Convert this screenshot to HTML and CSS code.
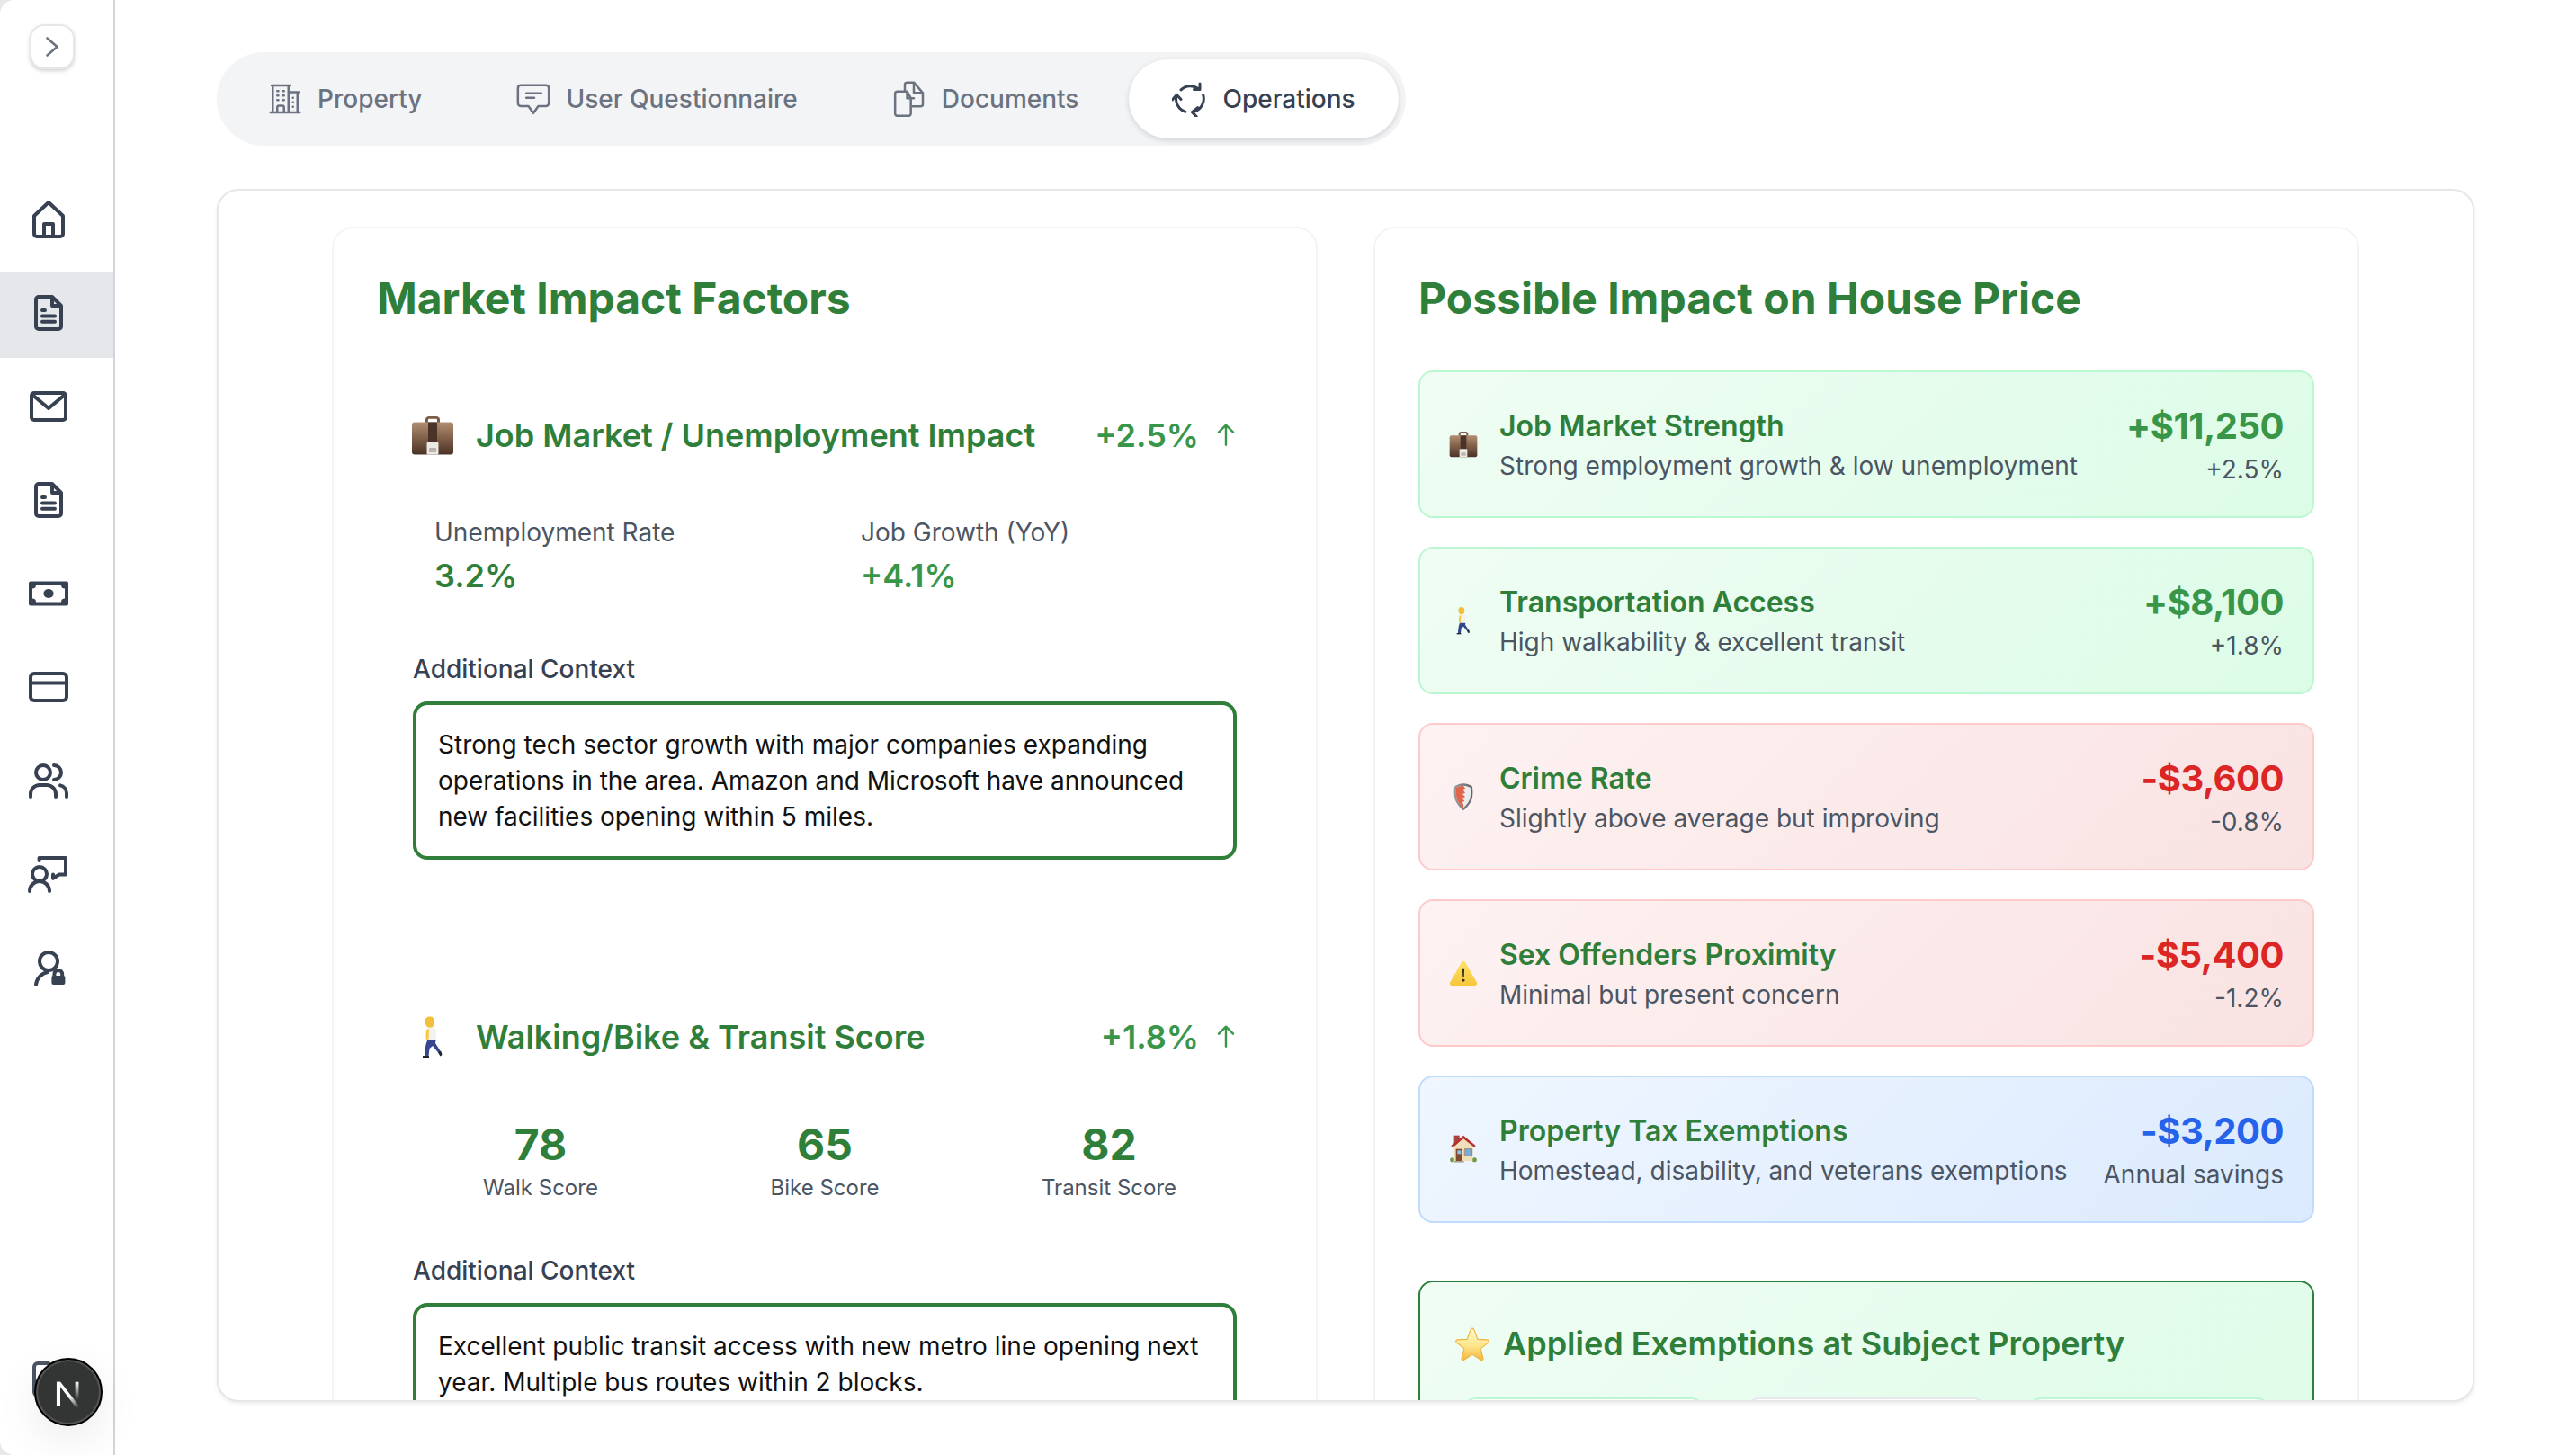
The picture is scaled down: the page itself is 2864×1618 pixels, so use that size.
FILE: index.html
```html
<!DOCTYPE html>
<html lang="en">
<head>
    <meta charset="UTF-8">
    <title>Operations</title>
    <link rel="stylesheet" href="styles.css">
</head>
<body>
<div class="app">
    <!--sidebar-->
    <aside class="sidebar">
        <button class="toggle">
            <svg viewBox="0 0 24 24"><path d="M6.500 2.500L17.500 12 6.500 21.500"/></svg>
        </button>
        <nav class="nav">
            <a class="nav_item"><svg viewBox="0 0 24 24"><path d="M12 2.500l8 7.500v10a1.500 1.500 0 0 1-1.500 1.500h-13A1.500 1.500 0 0 1 4 20V10zM9.500 21.500v-7h5v7"/></svg></a>
            <a class="nav_item current"><svg viewBox="0 0 24 24"><path d="M14 3H6.500A1.500 1.500 0 0 0 5 4.500v15A1.500 1.500 0 0 0 6.500 21h11a1.500 1.500 0 0 0 1.500-1.500V8zM14 3v5h5M8.500 10.500h1.500M8.500 13.700h7M8.500 16.900h7"/></svg></a>
            <a class="nav_item"><svg viewBox="0 0 24 24"><rect x="2.500" y="4.500" width="19" height="15" rx="1.500"/><path d="M3 5.500l9 7.500 9-7.500"/></svg></a>
            <a class="nav_item"><svg viewBox="0 0 24 24"><path d="M14 3H6.500A1.500 1.500 0 0 0 5 4.500v15A1.500 1.500 0 0 0 6.500 21h11a1.500 1.500 0 0 0 1.500-1.500V8zM14 3v5h5M8.500 10.500h1.500M8.500 13.700h7M8.500 16.900h7"/></svg></a>
            <a class="nav_item"><svg viewBox="0 0 24 24" class="solid"><rect x="1" y="5.250" width="22" height="13.500" rx="1"/><path class="cut" d="M5 7.200h14a2 2 0 0 0 2 2v5.600a2 2 0 0 0-2 2H5a2 2 0 0 0-2-2V9.200a2 2 0 0 0 2-2z"/><ellipse cx="12" cy="12" rx="2.800" ry="2.500"/></svg></a>
            <a class="nav_item"><svg viewBox="0 0 24 24"><rect x="2" y="4.500" width="20" height="15" rx="2"/><path d="M2 9.800h20"/></svg></a>
            <a class="nav_item"><svg viewBox="0 0 24 24"><circle cx="9" cy="7.500" r="4"/><path d="M2 21v-1.500A5 5 0 0 1 7 14.500h4a5 5 0 0 1 5 5V21M15 3.500a4 4 0 0 1 0 8M18.500 14.700a4.500 4.500 0 0 1 3.500 4.300V21"/></svg></a>
            <a class="nav_item"><svg viewBox="0 0 24 24"><circle cx="7" cy="12" r="4"/><path d="M1.500 21.500a5.500 5.500 0 0 1 11 0M6.800 4.500V3H21.500v9.200H18l-3.500 2.200v-2.200"/></svg></a>
            <a class="nav_item"><svg viewBox="0 0 24 24"><circle cx="12" cy="8.500" r="5"/><path d="M5 21.500a8 8 0 0 1 6.500-7"/><path d="M15.200 16.700v-1a2.200 2.200 0 0 1 4.400 0v1"/><rect class="fill" x="13.700" y="16.500" width="7.500" height="5" rx="1"/></svg></a>
        </nav>
        <svg class="nav_last" viewBox="0 0 24 24"><path d="M12 3H6a2 2 0 0 0-2 2v14a2 2 0 0 0 2 2h6"/></svg>
        <!--dev indicator-->
        <div class="next_badge">
            <svg viewBox="0 0 32 32">
                <defs>
                    <linearGradient id="nfade" x1="0.300" y1="0.300" x2="0.900" y2="1"><stop offset="0.4" stop-color="#fff"/><stop offset="1" stop-color="#fff" stop-opacity="0"/></linearGradient>
                    <linearGradient id="nfade2" x1="0" y1="0" x2="0" y2="1"><stop offset="0" stop-color="#fff"/><stop offset="0.8" stop-color="#fff" stop-opacity="0"/></linearGradient>
                </defs>
                <rect x="10.200" y="11" width="1.800" height="12" fill="#fff"/>
                <path d="M10.200 11h1.900l9.500 12.200-1.400 1z" fill="url(#nfade)"/>
                <rect x="19.400" y="11" width="1.700" height="11" fill="url(#nfade2)"/>
            </svg>
        </div>
    </aside>

    <div class="content">
        <!--tabs-->
        <div class="tabs">
            <a class="tab">
                <svg viewBox="0 0 24 24"><path d="M2.250 21h19.500m-18-18v18m10.500-18v18m6-13.500V21M6.750 6.750h.75m-.75 3h.75m-.75 3h.75m3-6h.75m-.75 3h.75m-.75 3h.75M6.750 21v-3.375c0-.621.504-1.125 1.125-1.125h2.250c.621 0 1.125.504 1.125 1.125V21M3 3h12m-.75 4.500H21m-3.750 3.750h.008v.008h-.008zm0 3h.008v.008h-.008zm0 3h.008v.008h-.008z"/></svg>
                Property
            </a>
            <a class="tab">
                <svg viewBox="0 0 24 24"><path d="M3.500 2.800h17a2 2 0 0 1 1.800 2v10a2 2 0 0 1-2 2h-5L12 21.500l-3.300-4.700h-5a2 2 0 0 1-2-2v-10a2 2 0 0 1 1.800-2zM7.300 8.300h10M7.300 11.200h5.300"/></svg>
                User Questionnaire
            </a>
            <a class="tab">
                <svg viewBox="0 0 24 24"><path d="M10.500 7H4a1.500 1.500 0 0 0-1.500 1.500v13.500A1.500 1.500 0 0 0 4 23.300h7.500A1.500 1.500 0 0 0 13 22v-10.500zM10.500 7v4.500H15"/><path d="M9 7V2.500A1.500 1.500 0 0 1 10.500 1H15l6 7v7.500a1.500 1.500 0 0 1-1.500 1.500H14M15 1v7h6"/></svg>
                Documents
            </a>
            <a class="tab active">
                <svg viewBox="0 0 24 24"><path d="M6 5.900a9 9 0 0 1 12-.4M18.600 1.800V5.700h-3.900M20.800 9.300a9 9 0 0 1-6.800 11.400M17.200 17.800l-3.800 3 2.900 2.900M9 20.600a9 9 0 0 1-6-10.800M.4 12.500l2.700-3.300 2.900 3.100"/></svg>
                Operations
            </a>
        </div>

        <!--main card-->
        <div class="main_card">
            <div class="panels">
                <!--left-->
                <section class="panel">
                    <h2 class="panel_title">Market Impact Factors</h2>

                    <div class="factor">
                        <div class="factor_head">
                            <svg class="emoji large" viewBox="0 0 48 48"><use href="#briefcase"/></svg>
                            <h3 class="factor_name">Job Market / Unemployment Impact</h3>
                            <span class="factor_pct">+2.5%</span>
                            <svg class="arrow" viewBox="0 0 24 24"><path d="M12 20V3.500M6 9.500l6-6 6 6"/></svg>
                        </div>
                        <div class="stats two">
                            <div class="stat">
                                <div class="stat_label">Unemployment Rate</div>
                                <div class="stat_value">3.2%</div>
                            </div>
                            <div class="stat">
                                <div class="stat_label">Job Growth (YoY)</div>
                                <div class="stat_value up">+4.1%</div>
                            </div>
                        </div>
                        <div class="context_label">Additional Context</div>
                        <div class="context">Strong tech sector growth with major companies expanding operations in the area. Amazon and Microsoft have announced new facilities opening within 5 miles.</div>
                    </div>

                    <div class="factor second">
                        <div class="factor_head">
                            <svg class="emoji large" viewBox="0 0 48 48"><use href="#walker"/></svg>
                            <h3 class="factor_name">Walking/Bike &amp; Transit Score</h3>
                            <span class="factor_pct">+1.8%</span>
                            <svg class="arrow" viewBox="0 0 24 24"><path d="M12 20V3.500M6 9.500l6-6 6 6"/></svg>
                        </div>
                        <div class="stats three">
                            <div class="score"><div class="score_num">78</div><div class="score_label">Walk Score</div></div>
                            <div class="score"><div class="score_num">65</div><div class="score_label">Bike Score</div></div>
                            <div class="score"><div class="score_num">82</div><div class="score_label">Transit Score</div></div>
                        </div>
                        <div class="context_label">Additional Context</div>
                        <div class="context">Excellent public transit access with new metro line opening next year. Multiple bus routes within 2 blocks.</div>
                    </div>
                </section>

                <!--right-->
                <section class="panel">
                    <h2 class="panel_title">Possible Impact on House Price</h2>

                    <div class="impact green">
                        <svg class="emoji" viewBox="0 0 48 48"><use href="#briefcase"/></svg>
                        <div class="impact_text">
                            <div class="impact_name">Job Market Strength</div>
                            <div class="impact_desc">Strong employment growth &amp; low unemployment</div>
                        </div>
                        <div class="impact_num">
                            <div class="impact_amount">+$11,250</div>
                            <div class="impact_sub">+2.5%</div>
                        </div>
                    </div>
                    <div class="impact green">
                        <svg class="emoji" viewBox="0 0 48 48"><use href="#walker"/></svg>
                        <div class="impact_text">
                            <div class="impact_name">Transportation Access</div>
                            <div class="impact_desc">High walkability &amp; excellent transit</div>
                        </div>
                        <div class="impact_num">
                            <div class="impact_amount">+$8,100</div>
                            <div class="impact_sub">+1.8%</div>
                        </div>
                    </div>
                    <div class="impact red">
                        <svg class="emoji" viewBox="0 0 48 48"><use href="#shield"/></svg>
                        <div class="impact_text">
                            <div class="impact_name">Crime Rate</div>
                            <div class="impact_desc">Slightly above average but improving</div>
                        </div>
                        <div class="impact_num">
                            <div class="impact_amount">-$3,600</div>
                            <div class="impact_sub">-0.8%</div>
                        </div>
                    </div>
                    <div class="impact red">
                        <svg class="emoji" viewBox="0 0 48 48"><use href="#warning"/></svg>
                        <div class="impact_text">
                            <div class="impact_name">Sex Offenders Proximity</div>
                            <div class="impact_desc">Minimal but present concern</div>
                        </div>
                        <div class="impact_num">
                            <div class="impact_amount">-$5,400</div>
                            <div class="impact_sub">-1.2%</div>
                        </div>
                    </div>
                    <div class="impact blue">
                        <svg class="emoji" viewBox="0 0 48 48"><use href="#house"/></svg>
                        <div class="impact_text">
                            <div class="impact_name">Property Tax Exemptions</div>
                            <div class="impact_desc">Homestead, disability, and veterans exemptions</div>
                        </div>
                        <div class="impact_num">
                            <div class="impact_amount">-$3,200</div>
                            <div class="impact_sub">Annual savings</div>
                        </div>
                    </div>

                    <div class="exempt">
                        <div class="exempt_head">
                            <svg class="exempt_star" viewBox="0 0 48 48"><use href="#star"/></svg>
                            <h3 class="exempt_title">Applied Exemptions at Subject Property</h3>
                        </div>
                        <div class="exempt_grid">
                            <div class="exempt_item"></div>
                            <div class="exempt_item muted"></div>
                            <div class="exempt_item"></div>
                        </div>
                    </div>
                </section>
            </div>
        </div>
    </div>
</div>

<!--emoji drawings, used above-->
<svg class="sprites" width="0" height="0">
    <defs>
        <linearGradient id="caseBody" x1="0" y1="0" x2="0" y2="1"><stop offset="0" stop-color="#b08f72"/><stop offset="0.55" stop-color="#7a5a44"/><stop offset="1" stop-color="#4a3226"/></linearGradient>
        <linearGradient id="starFill" x1="0" y1="0" x2="0" y2="1"><stop offset="0" stop-color="#fff8d0"/><stop offset="0.55" stop-color="#fde68a"/><stop offset="1" stop-color="#f5b642"/></linearGradient>
        <linearGradient id="warnFill" x1="0" y1="0" x2="0" y2="1"><stop offset="0" stop-color="#fde26a"/><stop offset="1" stop-color="#f8c63a"/></linearGradient>
        <linearGradient id="shieldMetal" x1="0" y1="0" x2="1" y2="0"><stop offset="0" stop-color="#9a9da0"/><stop offset="1" stop-color="#5f6266"/></linearGradient>

        <symbol id="briefcase" viewBox="0 0 48 48">
            <path d="M16 11V6.500C16 4.500 18 3 20 3h8c2 0 4 1.500 4 3.500V11h-3V7c0-.8-.6-1.300-1.300-1.300h-7.400c-.7 0-1.300.5-1.300 1.300v4z" fill="#7c5c46"/>
            <rect x="1" y="9.500" width="46" height="36" rx="3" fill="url(#caseBody)"/>
            <rect x="19" y="9.500" width="10" height="24" fill="#4b3327"/>
            <rect x="17.500" y="32" width="13" height="13.500" rx="1" fill="#ece8e4"/>
            <rect x="20" y="38" width="8" height="5" fill="#b9b3ad"/>
        </symbol>

        <symbol id="walker" viewBox="0 0 48 48">
            <path d="M15.500 7C15.500 3 18 1.500 21 1.500S26 3.500 26 7 25 13 22 14 16 12 15.500 7z" fill="#f2bf3a"/>
            <path d="M18 13.500h7c2 .5 3 4.500 3 8.500l-.5 7h-9c-1-5-1.500-11-.5-15.500z" fill="#f3f2ef"/>
            <path d="M17.500 15.500c-1 3.500-1.500 8.500-.5 12.500h2.500c0-5 .5-9 .5-12.500z" fill="#f6c945"/>
            <path d="M18 28h9.500l-.5 3 6 9.500-2.500 1.500-6.500-8-3.500 3-1 8.500H15c0-6.500 1-12.500 3-17.500z" fill="#35458f"/>
            <path d="M13 45h7v2h-7z" fill="#1f2433"/>
            <path d="M30 41.500l3.200-2 1.300 4.500-2 1.500z" fill="#1f2433"/>
        </symbol>

        <symbol id="shield" viewBox="0 0 48 48">
            <path d="M24 2c6 0 11 2 15 5 1 10 1 19-3 26-3 5-7 10-12 14-5-4-9-9-12-14C8 26 8 17 9 7c4-3 9-5 15-5z" fill="url(#shieldMetal)"/>
            <path d="M24 5.500c5 0 8.500 1.500 12 3.500.7 8.500.5 16.500-2.800 22.500-2.300 4-5.200 7.500-9.200 11-4-3.500-6.900-7-9.200-11C11.500 25.500 11.300 17.500 12 9c3.500-2 7-3.500 12-3.500z" fill="#e9ebed"/>
            <path d="M24 5.500c-5 0-8.500 1.500-12 3.500-.7 8.500-.5 16.500 2.800 22.500 2.300 4 5.200 7.500 9.200 11v-6l-2.500-3 4.500-2-4-5 5-2-4.500-5 4.500-2-4-5 4-2.500z" fill="#e2644a"/>
        </symbol>

        <symbol id="warning" viewBox="0 0 48 48">
            <path d="M24 4c1.500 0 2.500 1 3.300 2.400l19 33.500c1.300 2.500 0 5-3 5H4.700c-3 0-4.300-2.500-3-5l19-33.500C21.500 5 22.500 4 24 4z" fill="url(#warnFill)"/>
            <path d="M22.300 16h3.400l-.6 15h-2.200z" fill="#3a3020"/>
            <circle cx="24" cy="36.500" r="2.200" fill="#3a3020"/>
        </symbol>

        <symbol id="house" viewBox="0 0 48 48">
            <circle cx="5.500" cy="41.500" r="3.800" fill="#6f9a3f"/>
            <circle cx="42.500" cy="41.500" r="3.800" fill="#6f9a3f"/>
            <rect x="8.500" y="1" width="9" height="18" fill="#a8423a"/>
            <path d="M8.500 20L24 5l15.500 15v23.500h-31z" fill="#f0dfb8"/>
            <path d="M24 1L3.500 18l2 3L24 6.500 42.500 21l2-3z" fill="#b5332e"/>
            <rect x="11.500" y="23.500" width="11" height="20" fill="#7f4a30"/>
            <rect x="14" y="26" width="6" height="6" fill="#8ec0e8"/>
            <rect x="26.500" y="23.500" width="12" height="11.500" fill="#7ea9d0" stroke="#8a7b62" stroke-width="1.200"/>
            <rect x="9" y="43.500" width="16" height="2.500" fill="#a9a59c"/>
        </symbol>

        <symbol id="star" viewBox="0 0 48 48">
            <path d="M24 1.500c1.300 0 2.200 1 2.800 2.500l5 13.800 14.300.7c2.500.2 3 2.800 1.200 4.300L36 31.800l4 14c.6 2.400-1.500 3.800-3.500 2.500L24 40.200l-12.500 8.100c-2 1.300-4.100-.1-3.500-2.500l4-14L.7 22.800c-1.800-1.500-1.300-4.100 1.200-4.300l14.300-.7 5-13.800c.6-1.500 1.500-2.500 2.800-2.500z" fill="url(#starFill)" stroke="#eeb33c" stroke-width="1.500" transform="translate(2.400 2.400) scale(.9)"/>
        </symbol>
    </defs>
</svg>
</body>
</html>
```

FILE: styles.css
```css
*{
    margin: 0;
    padding: 0;
    box-sizing: border-box;
}
html,body
{
    height: 100%;
}
body
{
    background: #e8e8e8;
    font-family: Inter, "Liberation Sans", sans-serif;
    overflow: hidden;
}
svg
{
    display: block;
    fill: none;
    stroke: currentColor;
    stroke-linecap: round;
    stroke-linejoin: round;
}
.sprites
{
    position: absolute;
}
.app
{
    display: flex;
    height: 1618px;
    background: #fff;
    border-radius: 16px 0 0 16px;
}

/*sidebar*/
.sidebar
{
    position: relative;
    width: 128px;
    flex: none;
    border-right: 2px solid #d1d5db;
    color: #374151;
}
.toggle
{
    display: flex;
    align-items: center;
    justify-content: center;
    width: 50px;
    height: 50px;
    margin: 27px 0 0 33px;
    background: #fff;
    border: 2px solid #e5e7eb;
    border-radius: 16px;
    box-shadow: 0 2px 4px rgba(0,0,0,.18);
    color: #6b7280;
}
.toggle svg
{
    width: 24px;
    height: 24px;
    stroke-width: 2.600;
}
.nav
{
    display: flex;
    flex-direction: column;
    gap: 8px;
    margin-top: 121px;
}
.nav_item
{
    display: flex;
    justify-content: center;
    height: 96px;
    padding: 22px 18px 0 0;
}
.nav_item svg
{
    width: 48px;
    height: 48px;
    stroke-width: 2;
}
.nav_item.current
{
    background: #e5e7eb;
}
.nav_item .solid
{
    fill: #374151;
    stroke: none;
}
.nav_item .solid .cut
{
    fill: #fff;
}
.nav_item .fill
{
    fill: #374151;
    stroke: none;
}
.nav_last
{
    position: absolute;
    left: 30px;
    top: 1510px;
    width: 48px;
    height: 48px;
    stroke-width: 2;
    color: #4b5563;
}
.next_badge
{
    position: absolute;
    left: 38px;
    top: 1510px;
    width: 76px;
    height: 76px;
    background: #333534;
    border: 2px solid #000;
    border-radius: 50%;
    box-shadow: inset 0 0 0 2px #555, 0 16px 48px rgba(0,0,0,.08);
}
.next_badge svg
{
    width: 72px;
    height: 72px;
    stroke: none;
}

/*tabs*/
.content
{
    flex: 1;
    min-width: 0;
    padding: 58px 113px 0;
}
.tabs
{
    display: inline-flex;
    gap: 8px;
    padding: 8px;
    background: #f3f4f6;
    border-radius: 52px;
    vertical-align: top;
}
.tab
{
    display: flex;
    align-items: center;
    gap: 16px;
    height: 88px;
    padding: 0 48px;
    border-radius: 44px;
    color: #6b7280;
    font-size: 28px;
    font-weight: 500;
}
.tab svg
{
    width: 40px;
    height: 40px;
    stroke-width: 1.500;
}
.tab.active
{
    background: #fff;
    color: #374151;
    box-shadow: 0 2px 6px rgba(0,0,0,.14);
}
.tab.active svg
{
    stroke-width: 1.800;
}

/*main card*/
.main_card
{
    height: 1349px;
    margin-top: 48px;
    padding: 40px 126px 0;
    background: #fff;
    border: 2px solid #e5e7eb;
    border-radius: 24px;
    box-shadow: 0 2px 4px rgba(0,0,0,.08);
    overflow: hidden;
}
.panels
{
    display: grid;
    grid-template-columns: 1fr 1fr;
    gap: 62px;
}
.panel
{
    padding: 46px 48px 48px;
    background: #fff;
    border: 2px solid #f3f4f6;
    border-radius: 24px;
}
.panel_title
{
    margin-bottom: 48px;
    color: #2f7f3b;
    font-size: 48px;
    line-height: 64px;
    font-weight: 700;
}

/*left column*/
.factor
{
    padding: 40px;
}
.factor.second
{
    margin-top: 85px;
}
.factor_head
{
    display: flex;
    align-items: center;
    height: 64px;
    color: #399649;
}
.factor_name
{
    flex: 1;
    color: #2f7f3b;
    font-size: 36px;
    font-weight: 600;
}
.factor_pct
{
    color: #399649;
    font-size: 36px;
    font-weight: 600;
}
.arrow
{
    width: 32px;
    height: 32px;
    margin: 0 -4px 0 14px;
    stroke-width: 1.800;
}
.stats
{
    display: grid;
    gap: 32px;
    margin-top: 32px;
}
.stats.two
{
    grid-template-columns: 1fr 1fr;
}
.stats.three
{
    grid-template-columns: 1fr 1fr 1fr;
}
.stat
{
    padding: 24px;
}
.stat_label
{
    color: #4b5563;
    font-size: 28px;
    line-height: 40px;
}
.stat_value
{
    color: #2f7f3b;
    font-size: 36px;
    line-height: 56px;
    font-weight: 600;
}
.stat_value.up
{
    color: #399649;
}
.score
{
    padding: 24px 0;
    text-align: center;
}
.score_num
{
    color: #2f7f3b;
    font-size: 48px;
    line-height: 64px;
    font-weight: 700;
}
.score_label
{
    color: #4b5563;
    font-size: 24px;
    line-height: 32px;
}
.context_label
{
    margin-top: 32px;
    color: #374151;
    font-size: 28px;
    line-height: 40px;
    font-weight: 500;
}
.context
{
    margin-top: 16px;
    padding: 24px;
    border: 4px solid #2f7f3b;
    border-radius: 16px;
    color: #111;
    font-size: 28px;
    line-height: 40px;
}

/*right column*/
.impact
{
    display: flex;
    align-items: center;
    gap: 24px;
    height: 164px;
    margin-bottom: 32px;
    padding: 0 32px;
    border: 2px solid;
    border-radius: 16px;
}
.impact.green
{
    background: linear-gradient(135deg,#f0fdf4,#dcfce7);
    border-color: #bbf7d0;
}
.impact.red
{
    background: linear-gradient(135deg,#fef2f2,#f9e2e2);
    border-color: #fecaca;
}
.impact.blue
{
    background: linear-gradient(135deg,#eff6ff,#dbeafe);
    border-color: #bfdbfe;
}
.emoji
{
    flex: none;
    width: 32px;
    height: 32px;
    stroke: none;
}
.emoji.large
{
    width: 48px;
    height: 48px;
    margin: 0 24px 0 -2px;
}
.impact_text
{
    flex: 1;
    min-width: 0;
}
.impact_name
{
    color: #2f7f3b;
    font-size: 32px;
    line-height: 48px;
    font-weight: 600;
}
.impact_desc
{
    color: #4b5563;
    font-size: 28px;
    line-height: 40px;
}
.impact_num
{
    text-align: right;
    white-space: nowrap;
}
.impact_amount
{
    font-size: 40px;
    line-height: 56px;
    font-weight: 700;
    letter-spacing: -.5px;
}
.green .impact_amount
{
    color: #399649;
}
.red .impact_amount
{
    color: #dc2626;
}
.blue .impact_amount
{
    color: #2563eb;
}
.impact_sub
{
    color: #4b5563;
    font-size: 28px;
    line-height: 40px;
}
.exempt
{
    margin-top: 64px;
    padding: 44px 46px 46px;
    background: linear-gradient(135deg,#f0fdf4,#dcfce7);
    border: 2px solid #2f7f3b;
    border-radius: 16px;
}
.exempt_head
{
    display: flex;
    align-items: center;
    gap: 14px;
    height: 48px;
}
.exempt_star
{
    width: 40px;
    height: 40px;
    margin-left: -8px;
    stroke: none;
}
.exempt_title
{
    color: #2f7f3b;
    font-size: 36px;
    font-weight: 600;
}
.exempt_grid
{
    display: grid;
    grid-template-columns: repeat(3,1fr);
    gap: 44px;
    margin-top: 36px;
}
.exempt_item
{
    height: 120px;
    background: #fff;
    border: 2px solid #bbf7d0;
    border-radius: 16px;
}
.exempt_item.muted
{
    border-color: #e5e7eb;
}
```
